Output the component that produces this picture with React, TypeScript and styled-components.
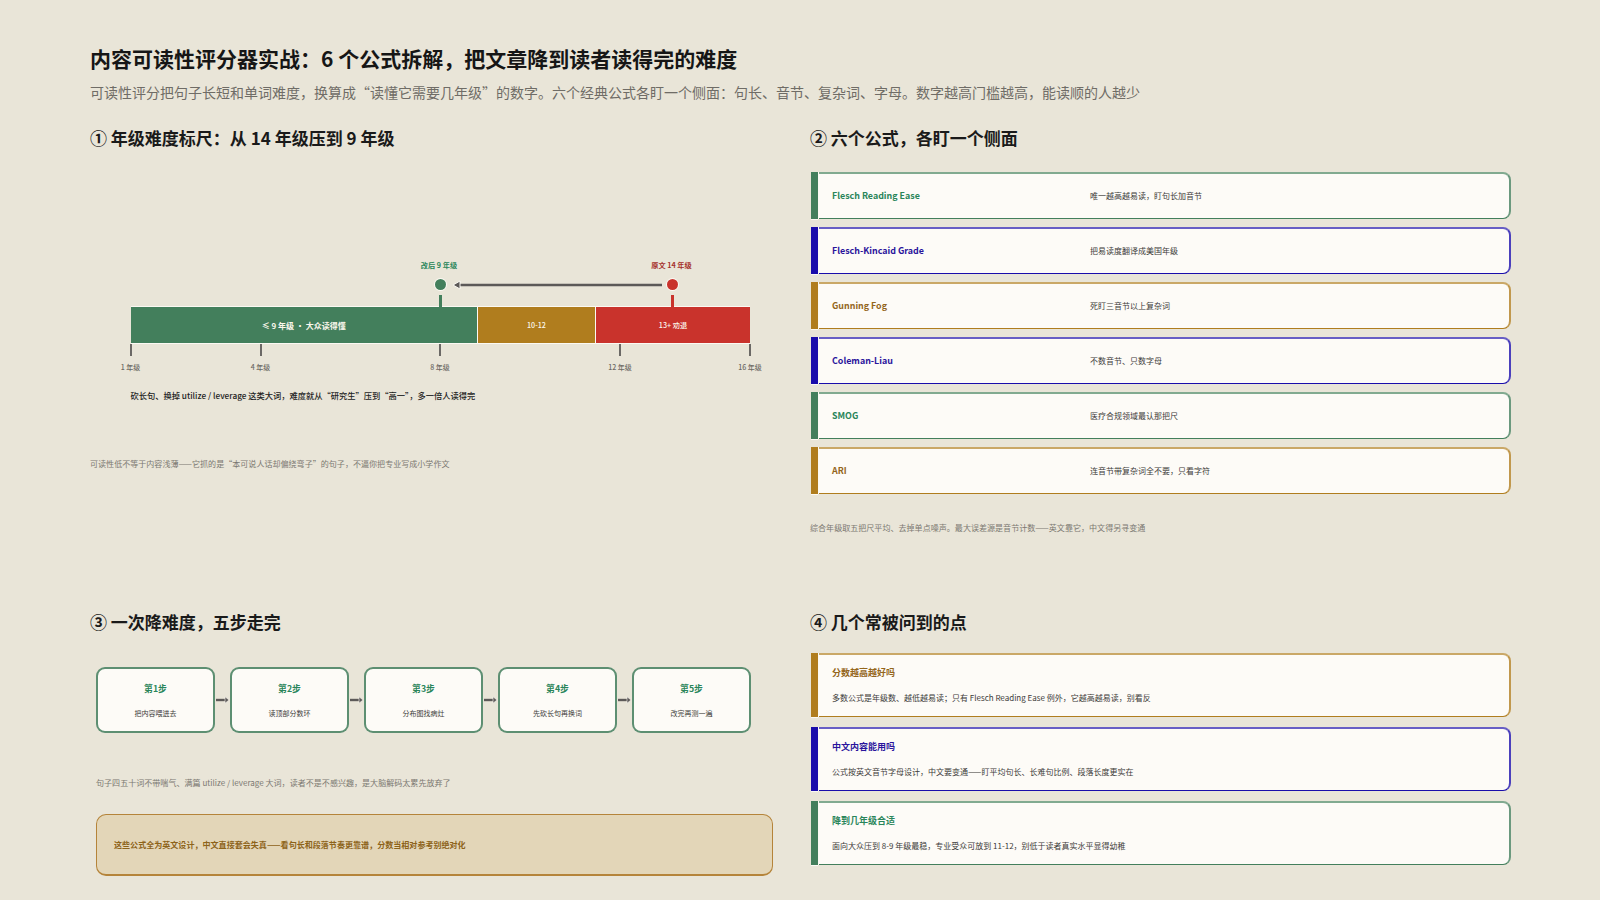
import {Fragment} from 'react'
import styled, {createGlobalStyle} from 'styled-components'

const GREEN = '#437f5c'
const INDIGO = '#1a0dab'
const GOLD = '#b07d1e'
const RED = '#c9332c'

type Tone = {strip: string; text: string}

const tones: Record<string, Tone> = {
  green: {strip: GREEN, text: '#2a855a'},
  indigo: {strip: INDIGO, text: '#2a149c'},
  gold: {strip: GOLD, text: '#94661c'},
}

const GlobalStyle = createGlobalStyle`
  html, body {
    margin: 0;
    padding: 0;
    background: #e9e5d8;
  }
  body {
    font-family: "Noto Sans CJK SC", "Noto Sans", sans-serif;
    color: #1d1d1d;
  }
`

const Page = styled.main`
  box-sizing: border-box;
  width: 1600px;
  height: 900px;
  padding: 43px 90px 0;
  overflow: hidden;
`

const Title = styled.h1`
  margin: 0;
  font-size: 21px;
  line-height: 31px;
  font-weight: 700;
  color: #161616;
`

const Subtitle = styled.p`
  margin: 7px 0 0;
  font-size: 14px;
  line-height: 22px;
  color: #6f6c66;
`

const Grid = styled.div`
  display: grid;
  grid-template-columns: 700px 700px;
  grid-template-rows: 484px auto;
  column-gap: 20px;
  margin-top: 22px;
`

const SectionTitle = styled.h2`
  margin: 0;
  font-size: 17px;
  line-height: 26px;
  font-weight: 700;
  color: #1a1a1a;
`

const Chart = styled.div`
  width: 619.5px;
  margin: 109px 0 0 40.5px;
`

const MarkerLane = styled.div`
  position: relative;
  height: 47px;
`

const Marker = styled.div<{$at: number; $color: string}>`
  position: absolute;
  left: ${p => p.$at}px;
  top: 0;
  bottom: 0;
  width: 0;
  color: ${p => p.$color};
`

const MarkerLabel = styled.span<{$ink: string}>`
  position: absolute;
  top: 0;
  left: -1px;
  transform: translateX(-50%);
  white-space: nowrap;
  font-size: 7.2px;
  line-height: 11px;
  font-weight: 700;
  color: ${p => p.$ink};
`

const Dot = styled.span`
  position: absolute;
  top: 19px;
  left: -5.5px;
  width: 11px;
  height: 11px;
  border-radius: 50%;
  background: currentColor;
  box-shadow: 0 0 0 1px #fbf9f3;
`

const Stem = styled.span`
  position: absolute;
  top: 35px;
  bottom: 0;
  left: -1.5px;
  width: 3px;
  background: currentColor;
`

const ArrowSvg = styled.svg`
  position: absolute;
  left: 312px;
  top: 17px;
`

const Bar = styled.div`
  display: flex;
  height: 36px;
  border: solid #fbf9f3;
  border-width: 1px 0;
  margin-top: -1px;
`

const Segment = styled.div<{$width: number; $color: string; $small?: boolean}>`
  flex: 0 0 ${p => p.$width}px;
  display: flex;
  align-items: center;
  justify-content: center;
  box-sizing: border-box;
  background: ${p => p.$color};
  border-right: 1px solid #fbf9f3;
  color: #fbf7ec;
  font-size: ${p => (p.$small ? 7.2 : 8)}px;
  font-weight: ${p => (p.$small ? 500 : 700)};
  &:last-child {
    border-right: 0;
  }
`

const TickLane = styled.div`
  position: relative;
  height: 31px;
`

const Tick = styled.div<{$at: number}>`
  position: absolute;
  left: ${p => p.$at}px;
  top: 0;
  &::before {
    content: '';
    position: absolute;
    left: -1px;
    top: 0;
    width: 2px;
    height: 12px;
    background: #6b6865;
  }
`

const TickLabel = styled.span`
  position: absolute;
  top: 18px;
  left: 0;
  transform: translateX(-50%);
  white-space: nowrap;
  font-size: 7px;
  line-height: 10px;
  font-weight: 500;
  color: #6d6a65;
`

const ChartNote = styled.p`
  margin: 14px 0 0;
  white-space: nowrap;
  font-size: 8.25px;
  line-height: 13px;
  font-weight: 500;
  color: #222;
`

const Footnote = styled.p<{$indent?: number; $top: number}>`
  margin: ${p => p.$top}px 0 0 ${p => p.$indent ?? 0}px;
  white-space: nowrap;
  font-size: 8.05px;
  line-height: 12px;
  color: #7b7871;
`

const CardList = styled.div<{$top: number; $gap: number}>`
  display: flex;
  flex-direction: column;
  gap: ${p => p.$gap}px;
  margin: ${p => p.$top}px -1px 0 0;
  padding-left: 1px;
`

const Card = styled.div<{$height: number}>`
  display: flex;
  height: ${p => p.$height}px;
  gap: 1px;
`

const Strip = styled.span<{$color: string}>`
  flex: 0 0 7px;
  background: ${p => p.$color};
  box-shadow: 1px 0 0 #fbf9f3, 0 1px 0 #fbf9f3;
`

const CardBody = styled.div<{$color: string}>`
  flex: 1;
  box-sizing: border-box;
  background: #fdfbf7;
  border-style: solid;
  border-width: 2px 2px 1px 0;
  border-color: ${p => p.$color}a8 ${p => p.$color}c8 ${p => p.$color} transparent;
  border-radius: 0 8px 8px 0;
  padding-left: 13px;
`

const FormulaRow = styled(CardBody)`
  display: grid;
  grid-template-columns: 258px 1fr;
  align-items: center;
  padding-bottom: 2px;
`

const FormulaName = styled.span<{$ink: string}>`
  font-size: 8.9px;
  font-weight: 700;
  color: ${p => p.$ink};
`

const Desc = styled.span`
  font-size: 8px;
  color: #3c3a37;
`

const QuestionBody = styled(CardBody)`
  display: flex;
  flex-direction: column;
  padding-top: 11px;
  gap: 12px;
`

const Question = styled.span<{$ink: string}>`
  font-size: 9px;
  line-height: 14px;
  font-weight: 700;
  color: ${p => p.$ink};
`

const Answer = styled.span`
  font-size: 8px;
  line-height: 12px;
  color: #3c3a37;
`

const Steps = styled.div`
  display: flex;
  align-items: center;
  margin: 32px 0 0 6px;
  width: 655px;
`

const StepCard = styled.div`
  flex: 0 0 119px;
  box-sizing: border-box;
  height: 66px;
  display: flex;
  flex-direction: column;
  align-items: center;
  padding-top: 13px;
  gap: 13px;
  background: #fdfbf7;
  border: 2px solid #477f60e0;
  border-radius: 9px;
`

const StepName = styled.span`
  font-size: 8.8px;
  line-height: 13px;
  font-weight: 700;
  color: #2a855a;
`

const StepDesc = styled.span`
  font-size: 7px;
  line-height: 11px;
  color: #3c3a37;
`

const StepArrow = styled.svg`
  flex: 1;
  height: 8px;
`

const Callout = styled.div`
  box-sizing: border-box;
  display: flex;
  align-items: center;
  width: 677px;
  height: 62px;
  margin: 25px 0 0 6px;
  padding-left: 17px;
  background: #e3d6b8;
  border: solid #b5843a;
  border-width: 1px 1px 2px;
  border-radius: 10px;
  font-size: 8.05px;
  font-weight: 700;
  color: #8d6319;
`

const formulas = [
  {name: 'Flesch Reading Ease', desc: '唯一越高越易读，盯句长加音节', tone: 'green'},
  {name: 'Flesch-Kincaid Grade', desc: '把易读度翻译成美国年级', tone: 'indigo'},
  {name: 'Gunning Fog', desc: '死盯三音节以上复杂词', tone: 'gold'},
  {name: 'Coleman-Liau', desc: '不数音节、只数字母', tone: 'indigo'},
  {name: 'SMOG', desc: '医疗合规领域最认那把尺', tone: 'green'},
  {name: 'ARI', desc: '连音节带复杂词全不要，只看字符', tone: 'gold'},
]

const questions = [
  {
    q: '分数越高越好吗',
    a: '多数公式是年级数、越低越易读；只有 Flesch Reading Ease 例外，它越高越易读，别看反',
    tone: 'gold',
  },
  {
    q: '中文内容能用吗',
    a: '公式按英文音节字母设计，中文要变通——盯平均句长、长难句比例、段落长度更实在',
    tone: 'indigo',
  },
  {
    q: '降到几年级合适',
    a: '面向大众压到 8-9 年级最稳，专业受众可放到 11-12，别低于读者真实水平显得幼稚',
    tone: 'green',
  },
]

const steps = ['把内容喂进去', '读顶部分数环', '分布图找病灶', '先砍长句再换词', '改完再测一遍']

const ticks = [
  {at: 0, label: '1 年级'},
  {at: 130, label: '4 年级'},
  {at: 309.5, label: '8 年级'},
  {at: 489.5, label: '12 年级'},
  {at: 619.5, label: '16 年级'},
]

const App = () => {
  return (
    <Page>
      <GlobalStyle />
      <Title>内容可读性评分器实战：6 个公式拆解，把文章降到读者读得完的难度</Title>
      <Subtitle>
        可读性评分把句子长短和单词难度，换算成“读懂它需要几年级”的数字。六个经典公式各盯一个侧面：句长、音节、复杂词、字母。数字越高门槛越高，能读顺的人越少
      </Subtitle>
      <Grid>
        <section>
          <SectionTitle>① 年级难度标尺：从 14 年级压到 9 年级</SectionTitle>
          <Chart>
            <MarkerLane>
              <Marker $at={309.5} $color={GREEN}>
                <MarkerLabel $ink="#2a855a">改后 9 年级</MarkerLabel>
                <Dot />
                <Stem />
              </Marker>
              <Marker $at={542} $color={RED}>
                <MarkerLabel $ink="#a5302b">原文 14 年级</MarkerLabel>
                <Dot />
                <Stem />
              </Marker>
              <ArrowSvg width="225" height="16" viewBox="0 0 225 16">
                <path d="M16 8H219" stroke="#5c5958" strokeWidth="2.4" />
                <path d="M10 8l7-4v8z" fill="#5c5958" stroke="#fbf9f3" strokeWidth="1" />
              </ArrowSvg>
            </MarkerLane>
            <Bar>
              <Segment $width={347.5} $color={GREEN}>≤ 9 年级 · 大众读得懂</Segment>
              <Segment $width={118} $color={GOLD} $small>10-12</Segment>
              <Segment $width={154} $color={RED} $small>13+ 劝退</Segment>
            </Bar>
            <TickLane>
              {ticks.map(t => (
                <Tick key={t.at} $at={t.at}>
                  <TickLabel>{t.label}</TickLabel>
                </Tick>
              ))}
            </TickLane>
            <ChartNote>
              砍长句、换掉 utilize / leverage 这类大词，难度就从“研究生”压到“高一”，多一倍人读得完
            </ChartNote>
          </Chart>
          <Footnote $top={56}>
            可读性低不等于内容浅薄——它抓的是“本可说人话却偏绕弯子”的句子，不逼你把专业写成小学作文
          </Footnote>
        </section>

        <section>
          <SectionTitle>② 六个公式，各盯一个侧面</SectionTitle>
          <CardList $top={21} $gap={8}>
            {formulas.map(f => (
              <Card key={f.name} $height={47}>
                <Strip $color={tones[f.tone].strip} />
                <FormulaRow $color={tones[f.tone].strip}>
                  <FormulaName $ink={tones[f.tone].text}>{f.name}</FormulaName>
                  <Desc>{f.desc}</Desc>
                </FormulaRow>
              </Card>
            ))}
          </CardList>
          <Footnote $top={28}>
            综合年级取五把尺平均、去掉单点噪声。最大误差源是音节计数——英文靠它，中文得另寻变通
          </Footnote>
        </section>

        <section>
          <SectionTitle>③ 一次降难度，五步走完</SectionTitle>
          <Steps>
            {steps.map((s, i) => (
              <Fragment key={s}>
                <StepCard>
                  <StepName>第{i + 1}步</StepName>
                  <StepDesc>{s}</StepDesc>
                </StepCard>
                {i < steps.length - 1 && (
                  <StepArrow viewBox="0 0 15 8">
                    <path d="M1 4H10" stroke="#5c5958" strokeWidth="2.4" />
                    <path d="M10 .8 14 4 10 7.2z" fill="#5c5958" stroke="#fbf9f3" strokeWidth=".6" />
                  </StepArrow>
                )}
              </Fragment>
            ))}
          </Steps>
          <Footnote $top={44} $indent={6}>
            句子四五十词不带喘气、满篇 utilize / leverage 大词，读者不是不感兴趣，是大脑解码太累先放弃了
          </Footnote>
          <Callout>这些公式全为英文设计，中文直接套会失真——看句长和段落节奏更靠谱，分数当相对参考别绝对化</Callout>
        </section>

        <section>
          <SectionTitle>④ 几个常被问到的点</SectionTitle>
          <CardList $top={18} $gap={10}>
            {questions.map(item => (
              <Card key={item.q} $height={64}>
                <Strip $color={tones[item.tone].strip} />
                <QuestionBody $color={tones[item.tone].strip}>
                  <Question $ink={tones[item.tone].text}>{item.q}</Question>
                  <Answer>{item.a}</Answer>
                </QuestionBody>
              </Card>
            ))}
          </CardList>
        </section>
      </Grid>
    </Page>
  )
}

export default App
